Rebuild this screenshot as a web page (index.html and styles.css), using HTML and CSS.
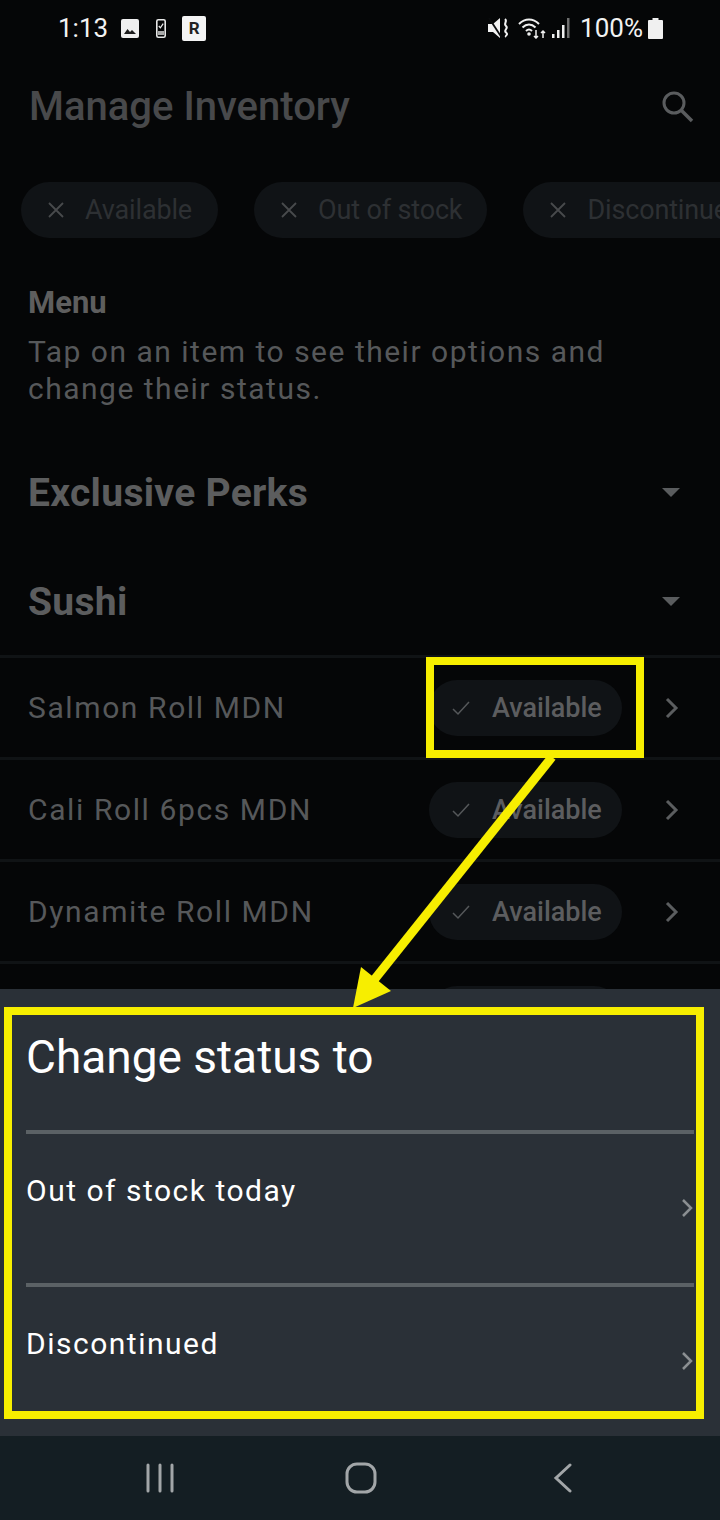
FILE: index.html
```html
<!DOCTYPE html>
<html lang="en">
<head>
    <meta charset="UTF-8">
    <meta name="viewport" content="width=device-width, initial-scale=1.0">
    <title>Manage Inventory</title>
    <link rel="stylesheet" href="styles.css">
</head>
<body>
    <div class="phone">
        <div class="statusbar">
            <div class="status-left">
                <span class="time">1:13</span>
                <svg class="ic-photo" width="18" height="19" viewBox="0 0 18 19">
                    <rect x="0" y="0" width="18" height="19" rx="2" fill="#efefef"/>
                    <path d="M3 15l3.500-5 2.500 3 2-2 4 4z" fill="#1c1c1c"/>
                </svg>
                <svg class="ic-device" width="10" height="19" viewBox="0 0 10 19">
                    <rect x="0.800" y="0.800" width="8.400" height="17.400" rx="1.500" fill="none" stroke="#e8e8e8" stroke-width="1.600"/>
                    <rect x="2" y="12" width="6" height="4" fill="#aaa"/>
                    <path d="M2.800 7l1.600 1.800L7.200 4.600" fill="none" stroke="#eee" stroke-width="1.200"/>
                </svg>
                <span class="r-badge">R</span>
            </div>
            <div class="status-right">
                <svg class="ic-mute" width="22" height="20" viewBox="0 0 22 20">
                    <path d="M0 6h5l7-6v20l-7-6H0z" fill="#f2f2f2"/>
                    <path d="M1 0l13 20" stroke="#0a0b0d" stroke-width="1.800"/>
                    <path d="M17 1c3 2.500-2 4.500 1 7s-3 4 0 6.500-1.500 3 0 4.500" fill="none" stroke="#f2f2f2" stroke-width="2"/>
                </svg>
                <svg class="ic-wifi" width="28" height="22" viewBox="0 0 28 22">
                    <path d="M1 7c6-6 14-6 20 0M4.500 10.500c4-4 9-4 13 0M8 14c2-2 4-2 6 0" fill="none" stroke="#efefef" stroke-width="2"/>
                    <circle cx="11" cy="17" r="1.800" fill="#efefef"/>
                    <path d="M18 13v8M16 19l2 2 2-2M25 21v-7M23 16l2-2 2 2" fill="none" stroke="#efefef" stroke-width="1.500"/>
                </svg>
                <svg class="ic-signal" width="18" height="20" viewBox="0 0 18 20">
                    <rect x="0" y="16" width="2.500" height="4" fill="#efefef"/>
                    <rect x="5" y="12" width="2.500" height="8" fill="#efefef"/>
                    <rect x="10" y="7" width="2.500" height="13" fill="#efefef"/>
                    <rect x="15" y="0" width="2.500" height="20" fill="#6e6e6e"/>
                </svg>
                <span class="battery-text">100%</span>
                <svg width="15" height="21" viewBox="0 0 15 21">
                    <path d="M4.500 0h6v2H14a1 1 0 0 1 1 1v17a1 1 0 0 1-1 1H1a1 1 0 0 1-1-1V3a1 1 0 0 1 1-1h3.500z" fill="#f0f0f0"/>
                </svg>
            </div>
        </div>

        <div class="content">
            <header class="topbar">
                <h1>Manage Inventory</h1>
                <svg width="36" height="36" viewBox="0 0 36 36">
                    <circle cx="15" cy="15" r="10" fill="none" stroke="#5a5c5e" stroke-width="3"/>
                    <path d="M22 22l11 11" stroke="#5a5c5e" stroke-width="3.500"/>
                </svg>
            </header>

            <div class="filters">
                <div class="chip"><svg class="x" width="18" height="16" viewBox="0 0 18 16"><path d="M2 1l14 14M16 1L2 15" stroke="#484a4c" stroke-width="1.800"/></svg>Available</div>
                <div class="chip"><svg class="x" width="18" height="16" viewBox="0 0 18 16"><path d="M2 1l14 14M16 1L2 15" stroke="#484a4c" stroke-width="1.800"/></svg>Out of stock</div>
                <div class="chip"><svg class="x" width="18" height="16" viewBox="0 0 18 16"><path d="M2 1l14 14M16 1L2 15" stroke="#484a4c" stroke-width="1.800"/></svg>Discontinued</div>
            </div>

            <section class="intro">
                <h2>Menu</h2>
                <p>Tap on an item to see their options and change their status.</p>
            </section>

            <div class="category">
                <h3>Exclusive Perks</h3>
                <span class="caret"></span>
            </div>
            <div class="category">
                <h3>Sushi</h3>
                <span class="caret"></span>
            </div>

            <div class="item">
                <span class="item-name">Salmon Roll MDN</span>
                <span class="status-pill">
                    <svg width="20" height="16" viewBox="0 0 20 16"><path d="M2 9l5 5L18 2" fill="none" stroke="#55585a" stroke-width="1.500"/></svg>
                    Available
                </span>
                <svg class="item-arrow" width="16" height="22" viewBox="0 0 16 22"><path d="M3 2l9 9-9 9" fill="none" stroke="#5b5d5f" stroke-width="3"/></svg>
            </div>
            <div class="item">
                <span class="item-name">Cali Roll 6pcs MDN</span>
                <span class="status-pill">
                    <svg width="20" height="16" viewBox="0 0 20 16"><path d="M2 9l5 5L18 2" fill="none" stroke="#55585a" stroke-width="1.500"/></svg>
                    Available
                </span>
                <svg class="item-arrow" width="16" height="22" viewBox="0 0 16 22"><path d="M3 2l9 9-9 9" fill="none" stroke="#5b5d5f" stroke-width="3"/></svg>
            </div>
            <div class="item">
                <span class="item-name">Dynamite Roll MDN</span>
                <span class="status-pill">
                    <svg width="20" height="16" viewBox="0 0 20 16"><path d="M2 9l5 5L18 2" fill="none" stroke="#55585a" stroke-width="1.500"/></svg>
                    Available
                </span>
                <svg class="item-arrow" width="16" height="22" viewBox="0 0 16 22"><path d="M3 2l9 9-9 9" fill="none" stroke="#5b5d5f" stroke-width="3"/></svg>
            </div>
            <div class="item">
                <span class="item-name"></span>
                <span class="status-pill"></span>
                <svg class="item-arrow" width="16" height="22" viewBox="0 0 16 22"></svg>
            </div>
        </div>

        <div class="sheet">
            <h2 class="sheet-title">Change status to</h2>
            <div class="option">
                <span>Out of stock today</span>
                <svg width="14" height="20" viewBox="0 0 14 20"><path d="M3 2l8 8-8 8" fill="none" stroke="#8b8f92" stroke-width="2.500"/></svg>
            </div>
            <div class="option">
                <span>Discontinued</span>
                <svg width="14" height="20" viewBox="0 0 14 20"><path d="M3 2l8 8-8 8" fill="none" stroke="#8b8f92" stroke-width="2.500"/></svg>
            </div>
        </div>

        <nav class="navbar">
            <svg width="30" height="30" viewBox="0 0 30 30"><path d="M3 2v26M15 2v26M27 2v26" stroke="#a2a6a8" stroke-width="3" stroke-linecap="round"/></svg>
            <svg width="32" height="32" viewBox="0 0 32 32"><rect x="2" y="2" width="28" height="28" rx="10" fill="none" stroke="#a2a6a8" stroke-width="3"/></svg>
            <svg width="26" height="30" viewBox="0 0 26 30"><path d="M23 2L9 15l14 13" fill="none" stroke="#a2a6a8" stroke-width="3" stroke-linecap="round"/></svg>
        </nav>

        <!-- yellow callouts drawn on top of the screenshot -->
        <div class="callout callout-pill"></div>
        <div class="callout callout-sheet"></div>
        <svg class="callout-arrow" width="720" height="1520" viewBox="0 0 720 1520">
            <path d="M552 757L374 980" stroke="#f7ee00" stroke-width="9"/>
            <path d="M353 1008L361 967L391 991z" fill="#f7ee00"/>
        </svg>
    </div>
</body>
</html>
```

FILE: styles.css
```css
* {
    box-sizing: border-box;
}
body {
    margin: 0;
    background-color: #050607;
    font-family: Roboto, sans-serif;
}
.phone {
    position: relative;
    width: 720px;
    height: 1520px;
    overflow: hidden;
    display: flex;
    flex-direction: column;
}
.statusbar {
    height: 56px;
    flex: none;
    display: flex;
    justify-content: space-between;
    align-items: center;
    padding: 0 57px 0 58px;
    color: #f2f2f2;
    font-size: 26px;
}
.status-left, .status-right {
    display: flex;
    align-items: center;
}
.time {
    margin-right: 13px;
}
.ic-device {
    margin-left: 17px;
}
.r-badge {
    margin-left: 16px;
    width: 24px;
    height: 25px;
    border-radius: 2px;
    background-color: #f4f4f4;
    color: #222;
    font-size: 17px;
    font-weight: 700;
    text-align: center;
    line-height: 25px;
}
.ic-wifi {
    margin-left: 8px;
}
.ic-signal {
    margin-left: 6px;
}
.battery-text {
    margin: 0 5px 0 10px;
}
.content {
    height: 933px;
    flex: none;
    overflow: hidden;
}
.topbar {
    height: 100px;
    display: flex;
    justify-content: space-between;
    align-items: center;
    padding: 0 25px 0 29px;
}
h1 {
    margin: 0;
    font-size: 40px;
    font-weight: 500;
    color: #48494b;
}
.filters {
    display: flex;
    gap: 36px;
    margin-top: 26px;
    padding-left: 21px;
    white-space: nowrap;
}
.chip {
    flex: none;
    min-width: 197px;
    height: 56px;
    padding: 0 25px 0 26px;
    border-radius: 28px;
    background-color: #101316;
    display: flex;
    align-items: center;
    font-size: 27px;
    letter-spacing: -0.150px;
    color: #2d3033;
}
.x {
    margin-right: 20px;
}
.intro {
    margin: 47px 100px 30px 28px;
}
.intro h2 {
    margin: 0;
    font-size: 31px;
    line-height: 36px;
    font-weight: 700;
    color: #5e5e5e;
}
.intro p {
    margin: 12px 0 0 0;
    font-size: 30px;
    line-height: 37px;
    letter-spacing: 1.500px;
    color: #56585a;
}
.category {
    height: 109px;
    display: flex;
    justify-content: space-between;
    align-items: center;
    padding: 2px 40px 0 28px;
}
h3 {
    margin: 0;
    font-size: 39px;
    font-weight: 700;
    letter-spacing: 0.300px;
    color: #5c5d5e;
}
.caret {
    width: 0;
    height: 0;
    border-left: 9px solid transparent;
    border-right: 9px solid transparent;
    border-top: 9px solid #5a5c5e;
}
.item {
    height: 102px;
    border-top: 3px solid #101315;
    display: flex;
    align-items: center;
    padding: 0 40px 0 28px;
}
.item-name {
    flex: 1;
    font-size: 30px;
    letter-spacing: 1.600px;
    color: #56585a;
}
.status-pill {
    width: 193px;
    height: 56px;
    border-radius: 28px;
    background-color: #101316;
    display: flex;
    align-items: center;
    gap: 21px;
    padding-left: 22px;
    margin-right: 42px;
    font-size: 27px;
    font-weight: 500;
    color: #5c5d5f;
}
.item-arrow {
    flex: none;
}
.sheet {
    height: 447px;
    flex: none;
    background-color: #2a3037;
    padding: 0 26px;
    color: #ffffff;
}
.sheet-title {
    margin: 0;
    height: 141px;
    padding-top: 40px;
    font-size: 46px;
    line-height: 56px;
    font-weight: 400;
}
.option {
    height: 153px;
    border-top: 4px solid #5b6165;
    display: flex;
    justify-content: space-between;
    padding-top: 39px;
    font-size: 30px;
    line-height: 36px;
    letter-spacing: 1.500px;
}
.option svg {
    margin-top: 25px;
}
.navbar {
    height: 84px;
    flex: none;
    background-color: #141e23;
    display: flex;
    justify-content: space-between;
    align-items: center;
    padding: 0 147px 0 145px;
}
.callout {
    position: absolute;
    border: 8px solid #f7ee00;
}
.callout-pill {
    left: 426px;
    top: 657px;
    width: 218px;
    height: 101px;
}
.callout-sheet {
    left: 4px;
    top: 1007px;
    width: 700px;
    height: 412px;
}
.callout-arrow {
    position: absolute;
    left: 0;
    top: 0;
}
```
